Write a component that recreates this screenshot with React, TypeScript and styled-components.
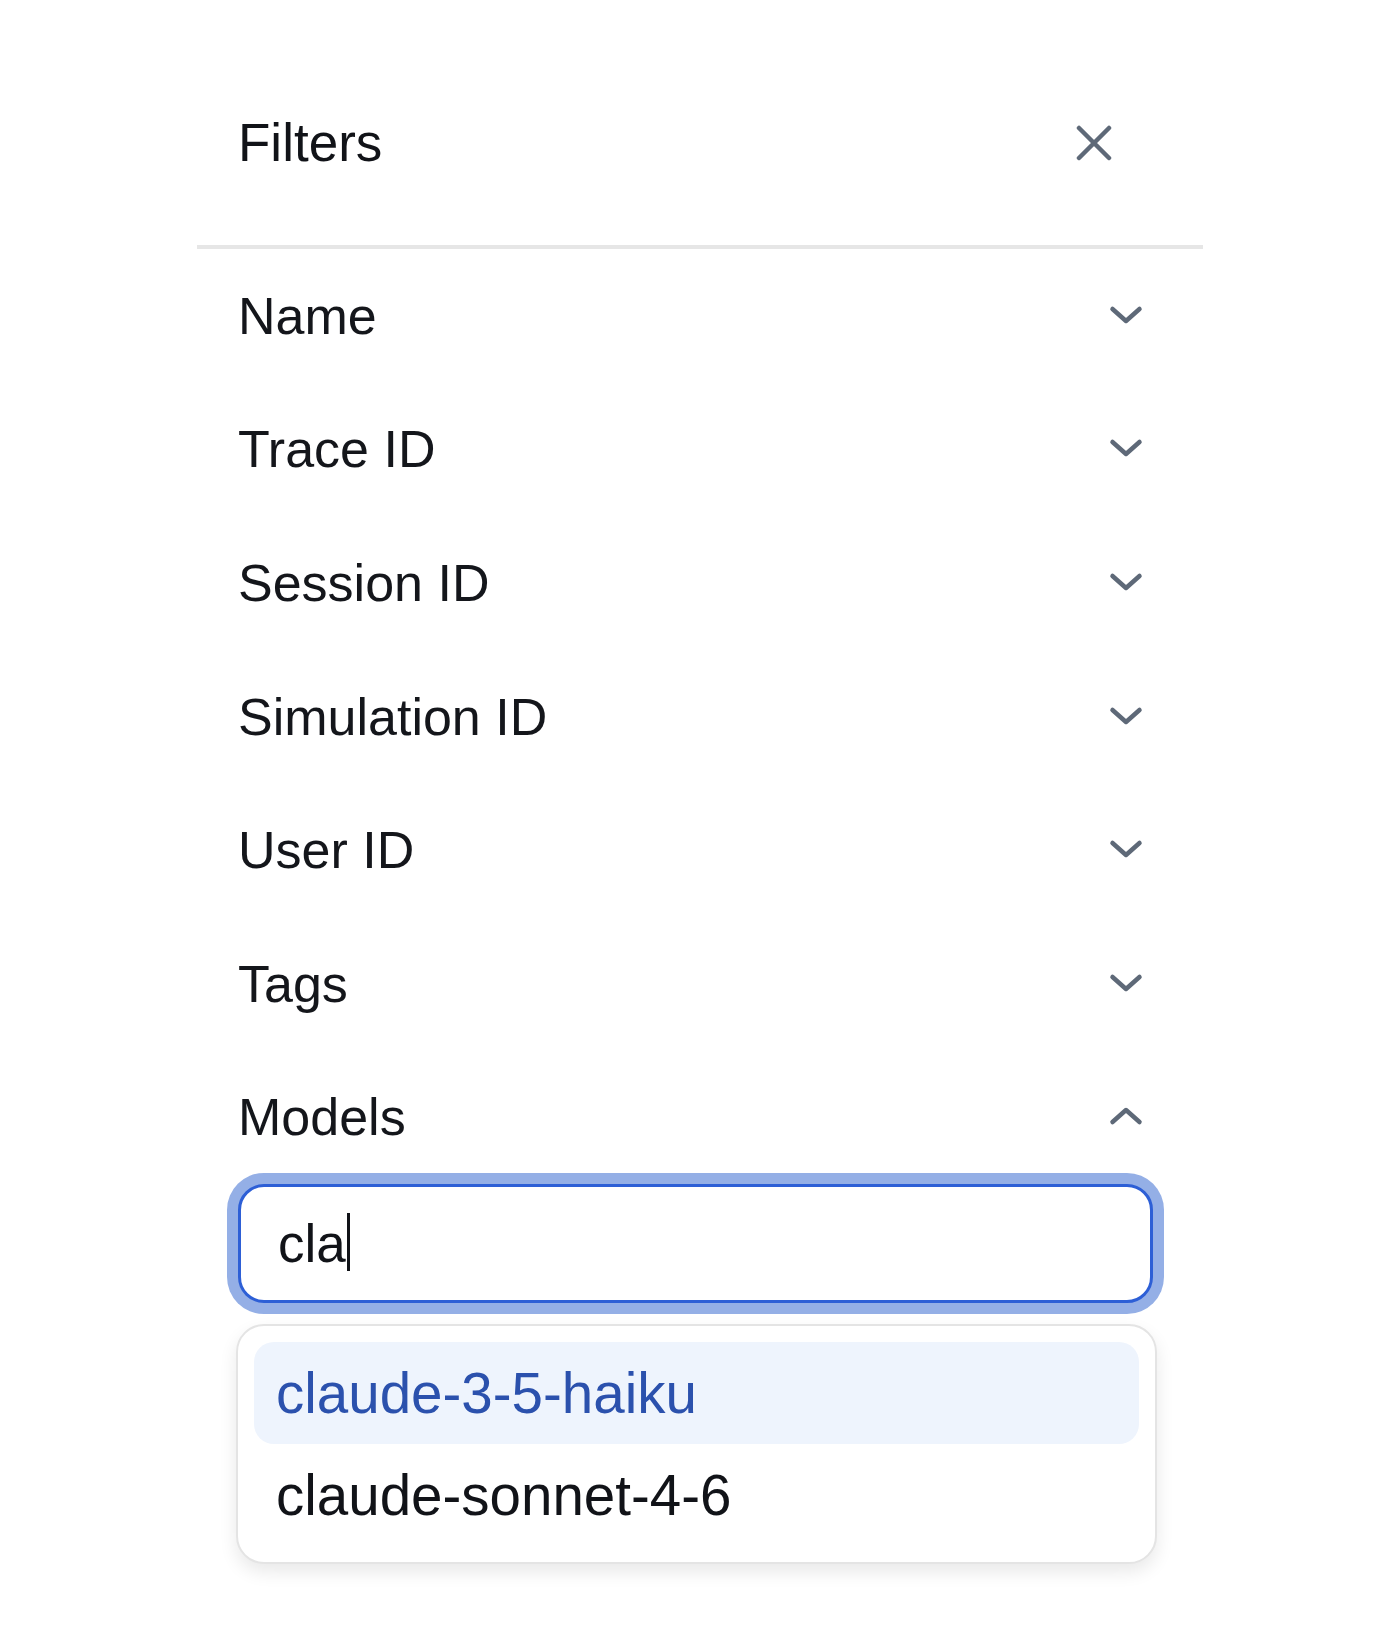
import React from "react";
import styled, { createGlobalStyle } from "styled-components";

const GlobalStyle = createGlobalStyle`
  html, body {
    margin: 0;
    padding: 0;
    background: #ffffff;
  }
  body {
    font-family: "Liberation Sans", Arial, Helvetica, sans-serif;
    color: #111318;
    -webkit-font-smoothing: antialiased;
  }
`;

const Page = styled.div`
  width: 1400px;
  min-height: 1646px;
  box-sizing: border-box;
  padding-top: 40px;
  padding-left: 197px;
`;

const Panel = styled.aside`
  width: 1006px;
  display: flex;
  flex-direction: column;
`;

const Header = styled.header`
  height: 209px;
  box-sizing: border-box;
  display: flex;
  align-items: center;
  justify-content: space-between;
  padding: 0 73px 0 41px;
  border-bottom: 4px solid #e6e6e6;
`;

const Title = styled.h2`
  margin: 0;
  font-size: 53px;
  font-weight: 400;
  line-height: 1;
  color: #111318;
`;

const CloseButton = styled.button`
  width: 72px;
  height: 72px;
  padding: 0;
  border: none;
  background: transparent;
  display: flex;
  align-items: center;
  justify-content: center;
  cursor: pointer;
`;

const Sections = styled.div`
  display: flex;
  flex-direction: column;
  padding: 0 50px 0 41px;
`;

const SectionRow = styled.div`
  height: 133.6px;
  display: flex;
  align-items: center;
  justify-content: space-between;
`;

const SectionLabel = styled.span`
  font-size: 52px;
  line-height: 1;
  color: #14161b;
`;

const IconSlot = styled.span`
  width: 58px;
  height: 48px;
  display: flex;
  align-items: center;
  justify-content: center;
  margin-top: -2px;
  margin-right: -2px;
`;

const SearchBox = styled.div`
  height: 119px;
  box-sizing: border-box;
  border: 3px solid #2d5fd6;
  border-radius: 26px;
  box-shadow: 0 0 0 11px #94afe6;
  display: flex;
  align-items: center;
  padding: 0 0 0 37px;
  font-size: 53px;
  color: #111318;
  background: #ffffff;
`;

const Caret = styled.span`
  display: inline-block;
  width: 3px;
  height: 58px;
  background: #111318;
  margin-left: 1px;
  margin-top: -4px;
`;

const Listbox = styled.ul`
  list-style: none;
  margin: 21px -4px 0 -2px;
  padding: 16px;
  border: 2px solid #e4e4e4;
  border-radius: 28px;
  background: #ffffff;
  box-shadow: 0 8px 18px rgba(0, 0, 0, 0.09);
  display: flex;
  flex-direction: column;
`;

const Option = styled.li<{ $active?: boolean }>`
  height: 102px;
  display: flex;
  align-items: center;
  padding-left: 22px;
  border-radius: 20px;
  font-size: 56.5px;
  background: ${(p) => (p.$active ? "#eef4fd" : "transparent")};
  color: ${(p) => (p.$active ? "#2b51ad" : "#111318")};
`;

const XIcon = () => (
  <svg width="36" height="36" viewBox="0 0 36 36" fill="none">
    <path
      d="M3 3 L33 33 M33 3 L3 33"
      stroke="#5e6978"
      strokeWidth="4.5"
      strokeLinecap="round"
    />
  </svg>
);

const Chevron = ({ up }: { up?: boolean }) => (
  <svg width="34" height="20" viewBox="0 0 34 20" fill="none">
    <path
      d={up ? "M3.5 16 L17 4 L30.5 16" : "M3.5 4 L17 16 L30.5 4"}
      stroke="#5e6978"
      strokeWidth="4.5"
      strokeLinecap="round"
      strokeLinejoin="round"
    />
  </svg>
);

const sections = [
  "Name",
  "Trace ID",
  "Session ID",
  "Simulation ID",
  "User ID",
  "Tags",
];

export default function App() {
  return (
    <>
      <GlobalStyle />
      <Page>
        <Panel>
          <Header>
            <Title>Filters</Title>
            <CloseButton aria-label="Close">
              <XIcon />
            </CloseButton>
          </Header>
          <Sections>
            {sections.map((s) => (
              <SectionRow key={s}>
                <SectionLabel>{s}</SectionLabel>
                <IconSlot>
                  <Chevron />
                </IconSlot>
              </SectionRow>
            ))}
            <SectionRow>
              <SectionLabel>Models</SectionLabel>
              <IconSlot>
                <Chevron up />
              </IconSlot>
            </SectionRow>
            <SearchBox>
              <span>cla</span>
              <Caret />
            </SearchBox>
            <Listbox role="listbox">
              <Option $active role="option">
                claude-3-5-haiku
              </Option>
              <Option role="option">claude-sonnet-4-6</Option>
            </Listbox>
          </Sections>
        </Panel>
      </Page>
    </>
  );
}
